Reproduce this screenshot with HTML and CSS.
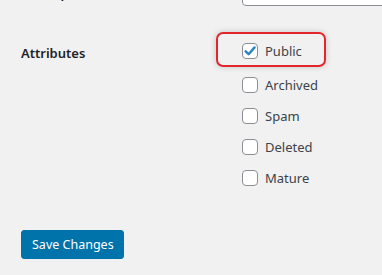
FILE: index.html
```html
<!DOCTYPE html>
<html lang="en">
<head>
    <meta charset="UTF-8">
    <meta name="viewport" content="width=device-width, initial-scale=1.0">
    <title>Edit Site</title>
    <link rel="stylesheet" href="styles.css">
</head>
<body>
    <div class="wrap">
        <div class="form-row first-row">
            <div class="row-label">Last Updated</div>
            <div class="row-field">
                <input type="text" class="text-input" value="">
            </div>
        </div>

        <div class="form-row attributes-row">
            <div class="row-label">Attributes</div>
            <div class="row-field">
                <div class="check-list">
                    <label class="check-item highlighted">
                        <span class="check-box checked">
                            <svg viewBox="0 0 16 16" width="16" height="16">
                                <path d="M3.6 8.3 L6.6 11.2 L12.6 4.4" fill="none" stroke="#2a85c4" stroke-width="2.4" stroke-linecap="round" stroke-linejoin="round"/>
                            </svg>
                        </span>
                        <span>Public</span>
                    </label>
                    <label class="check-item">
                        <span class="check-box"></span>
                        <span>Archived</span>
                    </label>
                    <label class="check-item">
                        <span class="check-box"></span>
                        <span>Spam</span>
                    </label>
                    <label class="check-item">
                        <span class="check-box"></span>
                        <span>Deleted</span>
                    </label>
                    <label class="check-item">
                        <span class="check-box"></span>
                        <span>Mature</span>
                    </label>
                </div>
            </div>
        </div>

        <div class="submit-row">
            <button class="button-primary">Save Changes</button>
        </div>
    </div>
</body>
</html>
```

FILE: styles.css
```css
:root {
    --page-bg: #f1f1f1;
    --text-color: #3c434a;
    --heading-color: #1d2327;
    --border-color: #8c8f94;
    --primary: #0073aa;
    --highlight: #e3262b;
}

body, html {
    margin: 0;
    padding: 0;
    background-color: var(--page-bg);
    font-family: 'Noto Sans', 'Open Sans', sans-serif;
    font-size: 13px;
    color: var(--text-color);
    height: 100vh;
    overflow: hidden;
}

.wrap {
    padding-left: 21px;
    margin-top: -24px;
}

.form-row {
    display: grid;
    grid-template-columns: 221px 1fr;
    align-items: start;
}

.row-label {
    font-weight: 600;
    color: var(--heading-color);
    line-height: 20px;
}

.first-row .row-label {
    padding-top: 7px;
}

.attributes-row .row-label {
    padding-top: 2px;
}

.text-input {
    display: block;
    width: 300px;
    height: 30px;
    box-sizing: border-box;
    border: 1px solid var(--border-color);
    border-radius: 4px;
    background: #fff;
    margin: 0;
}

.attributes-row {
    margin-top: 35px;
}

.check-list {
    display: flex;
    flex-direction: column;
    gap: 15px;
    padding-top: 2px;
}

.check-item {
    position: relative;
    display: flex;
    align-items: center;
    gap: 7px;
    height: 16px;
    line-height: 16px;
    color: var(--text-color);
}

.check-item.highlighted {
    margin-bottom: 3px;
}

/* red annotation box drawn over the first option */
.check-item.highlighted::after {
    content: '';
    position: absolute;
    left: -26px;
    top: -11px;
    width: 110px;
    height: 35px;
    box-sizing: border-box;
    border: 2px solid var(--highlight);
    border-radius: 7px;
    box-shadow: 0 0 6px rgba(0, 0, 0, 0.18);
}

.check-box {
    display: block;
    width: 16px;
    height: 16px;
    box-sizing: border-box;
    border: 1px solid var(--border-color);
    border-radius: 4px;
    background: #fff;
    flex-shrink: 0;
}

.check-box svg {
    display: block;
    margin: -1px;
}

.submit-row {
    margin-top: 44px;
}

.button-primary {
    display: block;
    height: 29px;
    padding: 0 10px;
    border: 1px solid var(--primary);
    border-radius: 3px;
    background: var(--primary);
    color: #fff;
    font-family: 'Noto Sans', 'Open Sans', sans-serif;
    font-size: 12.5px;
    line-height: 27px;
    white-space: nowrap;
    width: 103px;
}
```
